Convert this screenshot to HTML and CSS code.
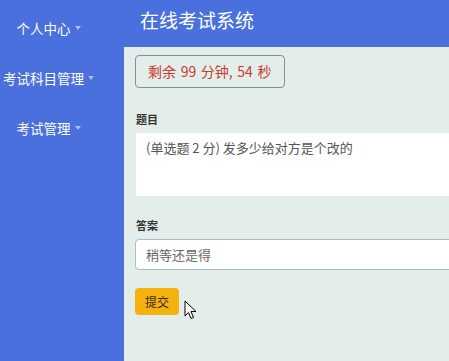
FILE: index.html
```html
<!DOCTYPE html>
<html lang="zh-CN">
<head>
    <meta charset="UTF-8">
    <meta name="viewport" content="width=device-width, initial-scale=1.0">
    <title>在线考试系统</title>
    <link rel="stylesheet" href="styles.css">
</head>
<body>

    <!-- Sidebar -->
    <nav class="sidebar">
        <a class="nav-item">个人中心<span class="caret"></span></a>
        <a class="nav-item">考试科目管理<span class="caret"></span></a>
        <a class="nav-item">考试管理<span class="caret"></span></a>
    </nav>

    <div class="main">
        <header class="topbar">
            <h1>在线考试系统</h1>
        </header>

        <div class="content">
            <div class="timer">剩余 99 分钟, 54 秒</div>

            <label class="field-label">题目</label>
            <div class="question">(单选题 2 分) 发多少给对方是个改的</div>

            <label class="field-label">答案</label>
            <input type="text" class="answer" value="稍等还是得">

            <div class="actions">
                <button class="submit-btn">提交</button>
                <svg class="cursor" width="13" height="21" viewBox="0 0 13 21">
                    <path d="M1 1 L1 16 L4.5 12.5 L7 18.5 L9.5 17.5 L7 11.5 L12 11.5 Z" fill="#fff" stroke="#000" stroke-width="1" stroke-linejoin="round"/>
                </svg>
            </div>
        </div>
    </div>

</body>
</html>
```

FILE: styles.css
```css
* {
    margin: 0;
    padding: 0;
    box-sizing: border-box;
    font-family: "Noto Sans CJK SC", "Noto Sans", sans-serif;
}

body {
    display: flex;
    height: 100vh;
    overflow: hidden;
    background: #4a70dd;
}

.sidebar {
    width: 124px;
    flex-shrink: 0;
    display: flex;
    flex-direction: column;
    padding: 16px 27px 0 0;
}

.nav-item {
    height: 50px;
    display: flex;
    justify-content: center;
    align-items: flex-start;
    color: #fff;
    font-size: 13.5px;
    line-height: 24px;
    white-space: nowrap;
    cursor: pointer;
}

.caret {
    width: 0;
    height: 0;
    margin: 10px 0 0 4px;
    border-left: 3.5px solid transparent;
    border-right: 3.5px solid transparent;
    border-top: 4px solid rgba(255, 255, 255, 0.55);
}

.main {
    flex: 1;
    display: flex;
    flex-direction: column;
    min-width: 0;
}

.topbar {
    height: 47px;
    flex-shrink: 0;
    padding: 6px 0 0 16px;
}

.topbar h1 {
    color: #fff;
    font-size: 19px;
    font-weight: normal;
    line-height: 28px;
}

.content {
    flex: 1;
    background: #e3eeea;
    padding: 8px 0 0 11px;
}

.timer {
    display: inline-block;
    padding: 5px 12px;
    border: 1px solid #7d93a3;
    border-radius: 4px;
    color: #c43b2c;
    font-size: 14px;
    line-height: 21px;
    word-spacing: 1.5px;
}

.field-label {
    display: block;
    margin: 24px 0 7px 1px;
    font-size: 11px;
    font-weight: bold;
    color: #333;
    line-height: 14px;
}

.question {
    width: 500px;
    height: 63px;
    margin-left: 1px;
    padding: 6px 10px;
    background: #fff;
    color: #555;
    font-size: 13px;
    line-height: 17px;
}

.question + .field-label {
    margin-top: 22px;
}

.answer {
    display: block;
    width: 500px;
    height: 31px;
    padding: 0 10px;
    border: 1px solid #a8bccd;
    border-radius: 4px;
    background: #fff;
    color: #666;
    font-size: 13px;
    outline: none;
}

.actions {
    display: flex;
    align-items: flex-start;
    margin-top: 18px;
}

.submit-btn {
    height: 27px;
    padding: 0 10px;
    background: #f5b20f;
    color: #3b2a00;
    border: none;
    border-radius: 4px;
    font-size: 12px;
    cursor: pointer;
}

.cursor {
    margin: 12px 0 0 5px;
}
```
